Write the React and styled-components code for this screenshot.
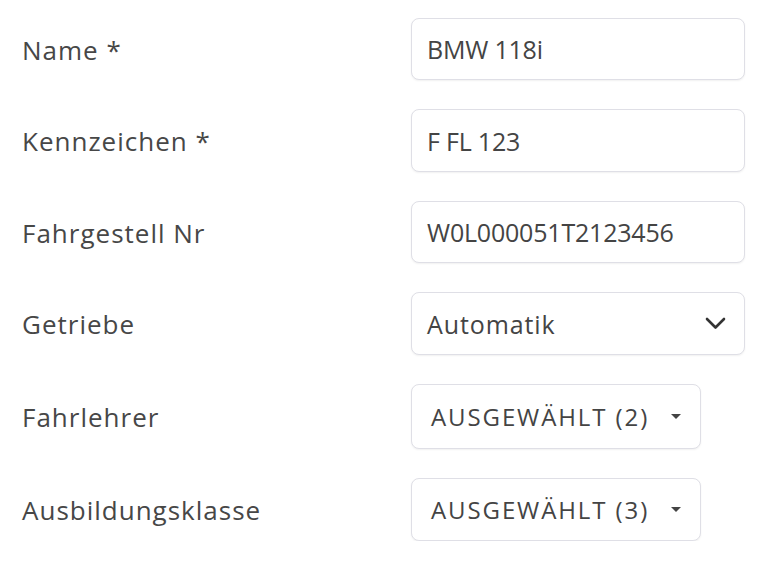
import React from 'react'
import styled, { createGlobalStyle } from 'styled-components'

const GlobalStyle = createGlobalStyle`
  body {
    margin: 0;
    background: #fff;
    font-family: "Open Sans", "Liberation Sans", sans-serif;
    color: #4a4a4a;
  }
`

const Form = styled.form`
  display: flex;
  flex-direction: column;
  gap: 29px;
  padding: 18px 19px 0 22px;
`

const Row = styled.div`
  display: grid;
  grid-template-columns: 389px 1fr;
  align-items: center;
  height: ${p => p.h || 63}px;
`

const Label = styled.label`
  font-size: 26px;
  color: #474747;
  letter-spacing: 1px;
  padding-top: 1px;
`

const Box = styled.div`
  box-sizing: border-box;
  height: 100%;
  width: ${p => (p.narrow ? '290px' : '334px')};
  display: flex;
  align-items: center;
  justify-content: space-between;
  padding: ${p => (p.narrow ? '0 19px 0 19px' : '0 18px 0 15px')};
  border: 1px solid #dfdfe6;
  border-radius: 8px;
  background: #fff;
  box-shadow: 0 1px 2px rgba(0, 0, 0, 0.06);
`

const Value = styled.span`
  font-size: 25px;
  color: #444;
  letter-spacing: ${p => (p.wide ? '0.9px' : '-0.2px')};
`

const Upper = styled.span`
  font-size: 24px;
  color: #444;
  letter-spacing: 1.9px;
  text-transform: uppercase;
`

const Chevron = () => (
  <svg width="21" height="13" viewBox="0 0 21 13">
    <path d="M2 2 L10.5 10.5 L19 2" fill="none" stroke="#333" strokeWidth="2.6" strokeLinecap="round" strokeLinejoin="round" />
  </svg>
)

const Caret = () => (
  <svg width="10" height="5" viewBox="0 0 10 5">
    <path d="M0 0 L10 0 L5 5 Z" fill="#444" />
  </svg>
)

export default function App() {
  return (
    <>
      <GlobalStyle />
      <Form>
        <Row h={62}>
          <Label>Name *</Label>
          <Box><Value>BMW 118i</Value></Box>
        </Row>
        <Row h={63}>
          <Label>Kennzeichen *</Label>
          <Box><Value>F FL 123</Value></Box>
        </Row>
        <Row h={62}>
          <Label>Fahrgestell Nr</Label>
          <Box><Value>W0L000051T2123456</Value></Box>
        </Row>
        <Row h={63}>
          <Label>Getriebe</Label>
          <Box><Value wide>Automatik</Value><Chevron /></Box>
        </Row>
        <Row h={65}>
          <Label>Fahrlehrer</Label>
          <Box narrow><Upper>Ausgewählt (2)</Upper><Caret /></Box>
        </Row>
        <Row h={63}>
          <Label>Ausbildungsklasse</Label>
          <Box narrow><Upper>Ausgewählt (3)</Upper><Caret /></Box>
        </Row>
      </Form>
    </>
  )
}
